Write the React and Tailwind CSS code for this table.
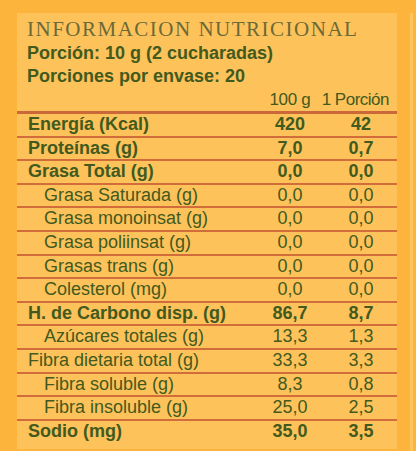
const rows = [
  { label: "Energía (Kcal)", a: "420", b: "42", bold: true },
  { label: "Proteínas (g)", a: "7,0", b: "0,7", bold: true },
  { label: "Grasa Total (g)", a: "0,0", b: "0,0", bold: true },
  { label: "Grasa Saturada (g)", a: "0,0", b: "0,0", indent: true },
  { label: "Grasa monoinsat (g)", a: "0,0", b: "0,0", indent: true },
  { label: "Grasa poliinsat (g)", a: "0,0", b: "0,0", indent: true },
  { label: "Grasas trans (g)", a: "0,0", b: "0,0", indent: true },
  { label: "Colesterol (mg)", a: "0,0", b: "0,0", indent: true },
  { label: "H. de Carbono disp. (g)", a: "86,7", b: "8,7", bold: true },
  { label: "Azúcares totales (g)", a: "13,3", b: "1,3", indent: true },
  { label: "Fibra dietaria total (g)", a: "33,3", b: "3,3" },
  { label: "Fibra soluble (g)", a: "8,3", b: "0,8", indent: true },
  { label: "Fibra insoluble (g)", a: "25,0", b: "2,5", indent: true },
  { label: "Sodio (mg)", a: "35,0", b: "3,5", bold: true, last: true },
];

const Row = ({ row }) => (
  <div
    className={`flex items-start h-[23.6px] leading-[20px] ${
      row.last ? "" : "border-b-2 border-[#d16c3b]"
    } ${row.bold ? "font-bold" : "font-normal"}`}
  >
    <div className={`flex-1 ${row.indent ? "pl-[27px]" : "pl-[11px]"}`}>{row.label}</div>
    <div className="w-[54px] text-center">{row.a}</div>
    <div className="w-[72px] ml-[8px] text-center">{row.b}</div>
  </div>
);

const App = () => {
  return (
    <div className="w-[416px] h-[451px] bg-[#fdb43c] flex pt-[13px] pl-[17px] overflow-hidden">
      <div className="w-[380px] h-[436px] bg-[#fec25b] text-[#425a1d] text-[18px] font-['Liberation_Sans',Arial,sans-serif]">
        <div className="pt-[4px] pl-[10px] h-[29px] leading-[24px] text-[21px] tracking-[1.5px] text-[#6a6a38] font-['Liberation_Serif','Times_New_Roman',serif]">
          INFORMACION NUTRICIONAL
        </div>
        <div className="pl-[10px] font-bold leading-[23px]">
          <div>Porción: 10 g (2 cucharadas)</div>
          <div>Porciones por envase: 20</div>
        </div>
        <div className="flex h-[26px] leading-[24px] text-[17px] border-b-[3px] border-[#cb6839]">
          <div className="flex-1" />
          <div className="w-[54px] text-center whitespace-nowrap tracking-[-0.3px]">100 g</div>
          <div className="w-[80px] text-right pr-[8px] whitespace-nowrap tracking-[-0.5px]">1 Porción</div>
        </div>
        {rows.map((row) => (
          <Row key={row.label} row={row} />
        ))}
      </div>
      <div className="w-[13px]" />
      <div className="w-[3px] h-full bg-[#fec45e]" />
    </div>
  );
};

export default App;
